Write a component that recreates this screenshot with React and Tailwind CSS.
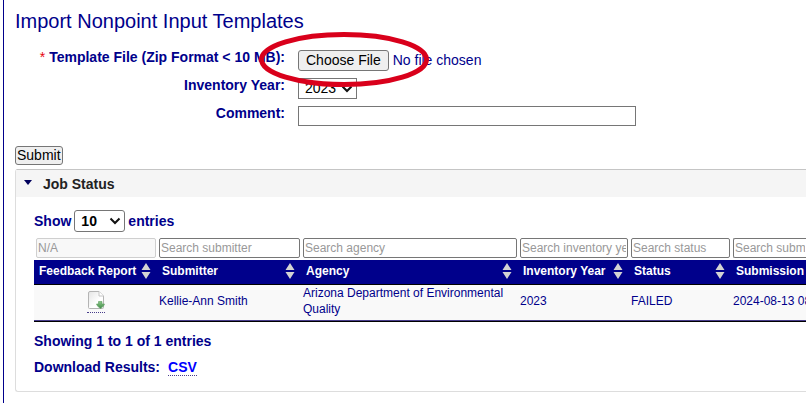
import React from 'react';

const columns = [
  { name: 'Feedback Report', placeholder: 'N/A', width: 'w-[123px]', sortable: true, disabled: true },
  { name: 'Submitter', placeholder: 'Search submitter', width: 'w-[144px]', sortable: true },
  { name: 'Agency', placeholder: 'Search agency', width: 'w-[217px]', sortable: true },
  { name: 'Inventory Year', placeholder: 'Search inventory year', width: 'w-[111px]', sortable: true },
  { name: 'Status', placeholder: 'Search status', width: 'w-[102px]', sortable: true },
  { name: 'Submission', placeholder: 'Search submission', width: 'w-auto', sortable: false, last: true }
];

const jobs = [
  {
    id: 1,
    submitter: 'Kellie-Ann Smith',
    agency: 'Arizona Department of Environmental Quality',
    year: '2023',
    status: 'FAILED',
    submitted: '2024-08-13 08'
  }
];

const SortIcon = () => (
  <svg className="h-4 w-[10px] shrink-0" viewBox="0 0 10 16" aria-hidden="true">
    <path d="M5 0 L9.5 7 H0.5 Z M5 16 L9.5 9 H0.5 Z" fill="#d3d3d3" />
  </svg>
);

const Chevron = () => (
  <svg className="pointer-events-none absolute top-1/2 right-1 h-2 w-3 -translate-y-1/2" viewBox="0 0 12 8" aria-hidden="true">
    <path d="M1.5 1.5 L6 6 L10.5 1.5" fill="none" stroke="#111" strokeWidth="2" />
  </svg>
);

const ReportIcon = () => (
  <svg className="h-[18px] w-[18px]" viewBox="0 0 18 18" aria-hidden="true">
    <defs>
      <linearGradient id="page" x1="0" y1="0" x2="1" y2="1">
        <stop offset="0" stopColor="#e4e4e4" />
        <stop offset="0.6" stopColor="#ffffff" />
      </linearGradient>
      <linearGradient id="arrow" x1="0" y1="0" x2="0" y2="1">
        <stop offset="0" stopColor="#8cc58c" />
        <stop offset="1" stopColor="#3f8c45" />
      </linearGradient>
    </defs>
    <path d="M3 0.5 H12 L16.5 5 V16.5 Q16.5 17.5 15.5 17.5 H2.5 Q1.5 17.5 1.5 16.5 V2 Q1.5 0.5 3 0.5 Z" fill="url(#page)" stroke="#b4b4b4" />
    <path d="M12 0.5 V5 H16.5" fill="#fff" stroke="#c4c4c4" />
    <path d="M11.5 10.5 H15 V13 H17.5 Q17 15.5 13.5 17.5 Q10 15.5 9.5 13 H11.5 Z" fill="url(#arrow)" stroke="#5a9e5c" strokeWidth="0.6" />
  </svg>
);

const ImportForm = () => (
  <form onSubmit={(e) => e.preventDefault()}>
    <div className="grid grid-cols-[270px_1fr] gap-x-[13px] gap-y-[7px] text-sm">
      <label htmlFor="template" className="h-[21px] text-right leading-[14px] font-bold">
        <span className="mr-1 font-normal text-red-600">*</span>Template File (Zip Format &lt; 10 MB):
      </label>
      <div className="relative h-[21px]">
        <input
          id="template"
          type="file"
          className="block h-[21px] w-full leading-[19px] file:mr-1 file:h-[21px] file:rounded-[3px] file:border file:border-solid file:border-[#767676] file:bg-[#efefef] file:px-[7px] file:text-black"
        />
        {/* Highlight around the file picker */}
        <svg className="pointer-events-none absolute -top-[18px] -left-[39px] h-[56px] w-[170px]" viewBox="0 0 170 56" aria-hidden="true">
          <ellipse cx="85" cy="27.5" rx="82.5" ry="25" fill="none" stroke="#d9001b" strokeWidth="5" />
        </svg>
      </div>

      <label htmlFor="year" className="h-[21px] text-right leading-[14px] font-bold">Inventory Year:</label>
      <div>
        <div className="relative -z-10 w-[59px]">
          <select id="year" className="block h-[21px] w-full appearance-none border border-[#767676] bg-white pl-[6px] leading-[19px] text-black">
            <option>2023</option>
          </select>
          <Chevron />
        </div>
      </div>

      <label htmlFor="comment" className="h-5 text-right leading-[14px] font-bold">Comment:</label>
      <input id="comment" type="text" className="h-5 w-[338px] border border-[#767676] bg-white px-1" />
    </div>
    <button type="submit" className="mt-5 block h-[19px] rounded-[3px] border border-[#767676] bg-[#efefef] px-px text-sm leading-[17px] text-black">
      Submit
    </button>
  </form>
);

const JobTable = () => (
  <table className="w-full table-fixed border-collapse text-left text-xs">
    <thead>
      <tr>
        {columns.map((col) => (
          <td key={col.name} className={`pb-[2px] pl-[2px] ${col.last ? 'pr-0' : 'pr-px'} ${col.width}`}>
            <input
              type="text"
              aria-label={col.name}
              placeholder={col.placeholder}
              disabled={col.disabled}
              className={`block h-5 w-full border px-px placeholder:text-[#999] ${
                col.disabled ? 'border-[#cfcfcf] bg-[#f8f8f8]' : 'border-[#767676] bg-white'
              } ${col.last ? 'rounded-l-[2px] border-r-0' : 'rounded-[2px]'}`}
            />
          </td>
        ))}
      </tr>
      <tr className="h-6 border-b border-black bg-[#00008b] text-white">
        {columns.map((col) => (
          <th key={col.name} scope="col" className="p-0 pb-[2px] pl-[5px]">
            <div className="flex items-center justify-between pr-[6px] leading-4 whitespace-nowrap">
              {col.name}
              {col.sortable && <SortIcon />}
            </div>
          </th>
        ))}
      </tr>
    </thead>
    <tbody>
      {jobs.map((job) => (
        <tr key={job.id} className="h-9 bg-[#f9f9f9] leading-4">
          <td className="p-0">
            <a href="#report" aria-label="Feedback report" className="mx-auto block w-[18px] border-b border-dotted border-[#483d8b] pb-[3px]">
              <ReportIcon />
            </a>
          </td>
          <td className="p-0 pb-[2px] pl-[2px]">{job.submitter}</td>
          <td className="p-0 pb-[2px] pl-[2px]">{job.agency}</td>
          <td className="p-0 pb-[2px] pl-[2px]">{job.year}</td>
          <td className="p-0 pb-[2px] pl-[2px]">{job.status}</td>
          <td className="overflow-hidden p-0 pb-[2px] pl-[2px] whitespace-nowrap">{job.submitted}</td>
        </tr>
      ))}
    </tbody>
  </table>
);

const App = () => {
  return (
    <div className="min-h-screen bg-white pr-1 pl-[3px] font-['Liberation_Sans',Arial,sans-serif] text-[#00008b]">
      <main className="isolate min-h-screen overflow-hidden border-l border-[#00008b] pt-2 pl-[11px]">
        <h1 className="mb-4 text-xl leading-[26px]">Import Nonpoint Input Templates</h1>
        <ImportForm />

        {/* Job status panel */}
        <section className="mt-1 rounded-l-[3px] border border-r-0 border-[#dddddd] border-t-[#c5c5c5]">
          <h2 className="flex h-[27px] items-center bg-[#f5f5f5] pl-2 text-sm font-bold text-[#222]">
            <svg className="mr-[11px] h-2 w-2" viewBox="0 0 8 8" aria-hidden="true">
              <path d="M0 0 H8 L4 5 Z" fill="#00005c" />
            </svg>
            Job Status
          </h2>
          <div className="pt-[13px] pb-[14px] pl-[18px] text-sm font-bold">
            <div className="flex items-center gap-[3px]">
              <label htmlFor="entries">Show</label>
              <div className="relative">
                <select id="entries" className="block h-[22px] w-[51px] appearance-none rounded-[3px] border border-[#767676] bg-white pl-[6px] leading-5 font-bold text-black">
                  <option>10</option>
                </select>
                <Chevron />
              </div>
              <span>entries</span>
            </div>
            <div className="mt-[6px] border-b border-black font-normal">
              <div className="border-b border-[#483d8b]">
                <JobTable />
              </div>
            </div>
            <p className="mt-[9px] leading-5">Showing 1 to 1 of 1 entries</p>
            <p className="mt-[6px] leading-5">
              Download Results:
              <a href="#csv" className="ml-2 border-b border-dotted border-[#483d8b] text-[#0000ff]">CSV</a>
            </p>
          </div>
        </section>
      </main>
    </div>
  );
};

export default App;
